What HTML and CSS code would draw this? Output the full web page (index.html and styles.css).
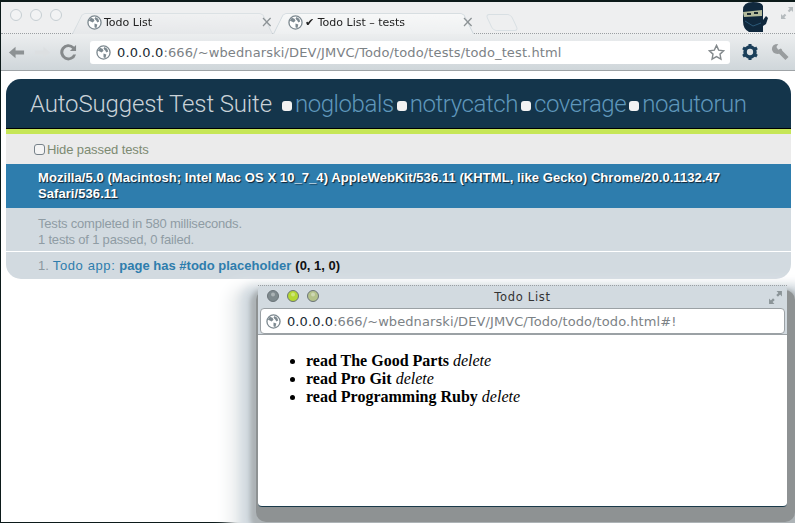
FILE: index.html
```html
<!DOCTYPE html>
<html lang="en">
<head>
  <meta charset="UTF-8">
  <meta name="viewport" content="width=device-width, initial-scale=1.0">
  <title>AutoSuggest Test Suite</title>
  <link rel="stylesheet" href="styles.css">
</head>
<body>
  <svg class="defs" width="0" height="0">
    <symbol id="globe" viewBox="0 0 16 16">
      <circle cx="8" cy="8" r="7" fill="#fff" stroke="#7d8990" stroke-width="1.4"/>
      <path d="M4 3l3 1 1 2-2 2-2-1-2-1zM9 2l3 2 1 3-2 1-1-2-2-2zM8 9l3 1-1 4-2-1z" fill="#7d8990"/>
    </symbol>
    <symbol id="dot" viewBox="0 0 12 12">
      <circle cx="6" cy="6" r="5.5" fill="currentColor" stroke="#6b7479"/>
      <circle cx="6" cy="4.5" r="2" fill="#fff" opacity=".35"/>
    </symbol>
    <symbol id="expand" viewBox="0 0 14 14">
      <path d="M8 1h5v5l-1.700-1.700-2 2-1.600-1.600 2-2zM6 13H1V8l1.700 1.700 2-2 1.600 1.600-2 2z" fill="currentColor"/>
    </symbol>
  </svg>

  <div class="browser">
    <div class="tabstrip">
      <div class="lights">
        <span class="light"></span>
        <span class="light"></span>
        <span class="light"></span>
      </div>
      <div class="tab">
        <svg class="favicon"><use href="#globe"/></svg>
        <span class="tab-title">Todo List</span>
        <span class="tab-close">×</span>
      </div>
      <div class="tab tab-active">
        <svg class="favicon"><use href="#globe"/></svg>
        <span class="tab-title">✔ Todo List – tests</span>
        <span class="tab-close">×</span>
      </div>
      <div class="new-tab"></div>
      <svg class="ninja" viewBox="0 0 30 32">
        <path d="M3 9Q3 1 13 1q9 0 10 4v14l3-4 2 2-2 6-3 2v6H9Q3 28 3 20z" fill="#10283d"/>
        <path d="M3 11l19-2v6L4 16z" fill="#b4bb9c"/>
        <path d="M7 12h4v2H7zM14 11h4v2h-4z" fill="#1b2a30"/>
        <path d="M5 20l8 5 8-3" fill="none" stroke="#2b5878"/>
      </svg>
      <svg class="fullscreen"><use href="#expand"/></svg>
    </div>

    <div class="toolbar">
      <svg class="nav-icon" viewBox="0 0 18 18"><path d="M1 9l7-6v4h9v4H8v4z" fill="#8d9294"/></svg>
      <svg class="nav-icon" viewBox="0 0 18 18"><path d="M17 9l-7-6v4H1v4h9v4z" fill="#dcdfe1"/></svg>
      <svg class="nav-icon" viewBox="0 0 18 18"><path d="M14 11a5.500 5.500 0 1 1-1-6l-2.500 2.500H17V1l-2 2A8.500 8.500 0 1 0 17 11z" fill="#85898b"/></svg>
      <div class="omnibox">
        <svg class="favicon"><use href="#globe"/></svg>
        <span class="url"><span class="host">0.0.0.0</span>:666/~wbednarski/DEV/JMVC/Todo/todo/tests/todo_test.html</span>
        <svg class="star" viewBox="0 0 18 18"><path d="M9 1.500l2.300 5 5.300.6-3.900 3.600 1 5.300L9 13.400 4.300 16l1-5.300L1.400 7.100l5.300-.6z" fill="#fff" stroke="#83898c" stroke-width="1.500"/></svg>
      </div>
      <svg class="tool-icon" viewBox="0 0 20 20">
        <circle cx="10" cy="10" r="5.500" fill="none" stroke="#1b3f5a" stroke-width="4"/>
        <path d="M10 10L10 1M10 10L10 19M10 10L2.200 5.500M10 10L17.800 14.500M10 10L2.200 14.500M10 10L17.800 5.500" stroke="#1b3f5a" stroke-width="3.400" stroke-dasharray="0 6 4"/>
      </svg>
      <svg class="tool-icon" viewBox="0 0 20 20"><path d="M1 7Q1 1 8 1L6 4.500l2 3 3-1.500q1.500 1 1.500 2.500l7 7-3.500 3.500-7-7Q2 13 1 7z" fill="#999d9f"/></svg>
    </div>

    <div class="page">
      <div class="suite">
        <h1 class="suite-header">
          <span class="suite-name">AutoSuggest Test Suite</span>
          <span class="option"><i class="box"></i>noglobals</span>
          <span class="option"><i class="box"></i>notrycatch</span>
          <span class="option"><i class="box"></i>coverage</span>
          <span class="option"><i class="box"></i>noautorun</span>
        </h1>
        <div class="suite-filter"><i class="checkbox"></i>Hide passed tests</div>
        <div class="suite-agent">Mozilla/5.0 (Macintosh; Intel Mac OS X 10_7_4) AppleWebKit/536.11 (KHTML, like Gecko) Chrome/20.0.1132.47 Safari/536.11</div>
        <div class="suite-result">Tests completed in 580 milliseconds.<br>1 tests of 1 passed, 0 failed.</div>
        <div class="suite-test">
          <span class="test-num">1.</span>
          <span class="test-module">Todo app:</span>
          <b class="test-name">page has #todo placeholder</b>
          <b class="test-count">(0, 1, 0)</b>
        </div>
      </div>
    </div>
  </div>

  <div class="popup">
    <div class="popup-title">
      <div class="popup-lights">
        <svg class="popup-light light-grey"><use href="#dot"/></svg>
        <svg class="popup-light light-green"><use href="#dot"/></svg>
        <svg class="popup-light light-pale"><use href="#dot"/></svg>
      </div>
      <span>Todo List</span>
      <svg class="popup-expand"><use href="#expand"/></svg>
    </div>
    <div class="popup-url">
      <svg class="favicon"><use href="#globe"/></svg>
      <span class="url"><span class="host">0.0.0.0</span>:666/~wbednarski/DEV/JMVC/Todo/todo/todo.html#!</span>
    </div>
    <div class="popup-body">
      <ul class="todos">
        <li><b>read The Good Parts</b> <i>delete</i></li>
        <li><b>read Pro Git</b> <i>delete</i></li>
        <li><b>read Programming Ruby</b> <i>delete</i></li>
      </ul>
    </div>
  </div>
</body>
</html>
```

FILE: styles.css
```css
html, body {
  margin: 0;
  height: 100%;
  overflow: hidden;
  background: #fff;
}

.defs {
  position: absolute;
}

.browser {
  height: 523px;
  box-sizing: border-box;
  border-top: 2px solid #0c1a1a;
  border-left: 1px solid #0c1a1a;
  border-bottom: 1px solid #0c1a1a;
  display: flex;
  flex-direction: column;
  font-family: "DejaVu Sans", sans-serif;
}

/* tabs */
.tabstrip {
  height: 32px;
  flex: none;
  display: flex;
  align-items: flex-end;
  background: #eeeff0;
  border-bottom: 1px dotted #9a9fa2;
  box-sizing: border-box;
}

.lights {
  display: flex;
  gap: 8px;
  margin: 0 0 12px 9px;
  width: 62px;
  flex: none;
}

.light {
  width: 12px;
  height: 12px;
  box-sizing: border-box;
  border: 1px solid #c6ced3;
  border-radius: 50%;
  background: #f2f3f4;
}

.tab {
  position: relative;
  width: 201px;
  height: 24px;
  margin-bottom: -1px;
  flex: none;
  display: flex;
  align-items: center;
  gap: 2px;
  padding: 0 0 0 15px;
  box-sizing: border-box;
  font-size: 11px;
  color: #222;
}

.tab::before {
  content: "";
  position: absolute;
  inset: 0;
  z-index: 0;
  background: linear-gradient(#f0f1f2, #e6e8ea);
  border: 1px solid #d5dce0;
  border-bottom: 0;
  border-radius: 4px 4px 0 0;
  transform: perspective(50px) rotateX(14deg);
  transform-origin: bottom;
}

.tab > * {
  position: relative;
}

.tab-active::before {
  background: linear-gradient(#f7f8f8, #eef0f1);
  border-color: #cfd8dd;
}

.tab-title {
  flex: 1;
  white-space: nowrap;
}

.tab-close {
  font-size: 15px;
  line-height: 1;
  color: #8d9396;
}

.favicon {
  width: 15px;
  height: 15px;
  flex: none;
}

.new-tab {
  width: 24px;
  height: 15px;
  margin: 0 0 2px 15px;
  border: 1px solid #d8dfe3;
  border-radius: 4px;
  transform: skewX(25deg);
  flex: none;
}

.ninja {
  width: 30px;
  height: 32px;
  margin-left: auto;
  margin-right: 10px;
  flex: none;
}

.fullscreen {
  width: 14px;
  height: 14px;
  color: #b5bbbe;
  margin: 0 1px 13px 0;
  flex: none;
}

/* toolbar */
.toolbar {
  height: 37px;
  flex: none;
  display: flex;
  align-items: center;
  padding: 0 0 0 7px;
  gap: 6px;
  box-sizing: border-box;
  background: linear-gradient(#eceeef, #cfd6da);
  border-bottom: 1px solid #9ea3a6;
}

.nav-icon {
  width: 17px;
  height: 17px;
  margin-right: 3px;
  flex: none;
}

.omnibox {
  flex: 1;
  height: 23px;
  display: flex;
  align-items: center;
  gap: 6px;
  padding: 0 5px 0 6px;
  margin-left: 4px;
  margin-right: 5px;
  background: #fff;
  border-radius: 3px;
}

.url {
  font-size: 13px;
  letter-spacing: .13px;
  color: #7c8286;
  white-space: nowrap;
  flex: 1;
}

.host {
  color: #1a2a33;
}

.star {
  width: 17px;
  height: 17px;
  flex: none;
}

.tool-icon {
  width: 18px;
  height: 18px;
  flex: none;
  margin-right: 6px;
}

/* test suite */
.page {
  flex: 1;
  padding: 8px 4px 0 5px;
  background: #fff;
}

.suite {
  border-radius: 15px;
  overflow: hidden;
  background: #d2dae0;
  font-family: "Liberation Sans", sans-serif;
  font-size: 13px;
}

.suite-header {
  margin: 0;
  height: 50px;
  padding-left: 24px;
  box-sizing: border-box;
  display: flex;
  align-items: center;
  gap: 3px;
  background: #14354b;
  border-bottom: 1px solid #000;
  font-family: Roboto, sans-serif;
  font-weight: 300;
  font-size: 24px;
  white-space: nowrap;
}

.suite-name {
  color: #c9d2d8;
  margin-right: 7px;
  letter-spacing: -.14px;
}

.option {
  display: flex;
  align-items: center;
  color: #5f97bb;
  gap: 3px;
  letter-spacing: -.42px;
}

.box {
  width: 10px;
  height: 10px;
  margin-top: 4px;
  border-radius: 3px;
  background: #f2f2f2;
}

.suite-filter {
  height: 35px;
  box-sizing: border-box;
  display: flex;
  align-items: center;
  padding-left: 28px;
  background: #ebebeb;
  border-top: 5px solid #c6e657;
  color: #7d8a72;
  letter-spacing: -.1px;
}

.checkbox {
  width: 9px;
  height: 9px;
  margin-right: 2px;
  border: 1px solid #77828a;
  border-radius: 3px;
  background: #f4f4f4;
}

.suite-agent {
  height: 44px;
  box-sizing: border-box;
  padding: 6px 32px 0;
  line-height: 16px;
  background: #2e7dad;
  color: #fff;
  font-weight: bold;
  letter-spacing: .07px;
  text-shadow: 1px 1px 1px #123;
}

.suite-result {
  height: 44px;
  box-sizing: border-box;
  padding: 8px 32px 0;
  line-height: 16px;
  letter-spacing: -.2px;
  color: #8f9ca4;
  border-bottom: 1px solid #fff;
}

.suite-test {
  height: 27px;
  display: flex;
  align-items: center;
  padding-left: 32px;
  gap: 4px;
}

.test-num {
  color: #8b989f;
}

.test-module {
  color: #2e7dad;
  letter-spacing: .6px;
}

.test-name {
  color: #2e7dad;
}

.test-count {
  color: #111;
}

/* popup window */
.popup {
  position: absolute;
  left: 258px;
  top: 285px;
  width: 529px;
  height: 222px;
  display: flex;
  flex-direction: column;
  background: #d2dae0;
  border-radius: 5px;
  box-shadow: 3px 10px 0 5px #8e9293, 2px 14px 4px 10px #adb3b6, 2px 20px 8px 20px #d2dae0, 2px 32px 14px 32px #eef0f1;
  font-family: "DejaVu Sans", sans-serif;
}

.popup-title {
  height: 23px;
  flex: none;
  position: relative;
  display: flex;
  align-items: center;
  justify-content: center;
  font-size: 11.500px;
  letter-spacing: .7px;
  color: #333;
  border-top: 1px dotted #9a9fa2;
  box-sizing: border-box;
}

.popup-lights {
  position: absolute;
  left: 9px;
  top: 4px;
  display: flex;
  gap: 8px;
}

.popup-light {
  width: 12px;
  height: 12px;
}

.light-grey {
  color: #7f8a8e;
}

.light-green {
  color: #b5d832;
}

.light-pale {
  color: #b4c28a;
}

.popup-expand {
  position: absolute;
  right: 4px;
  top: 4px;
  width: 15px;
  height: 15px;
  color: #8b9498;
}

.popup-url {
  height: 26px;
  flex: none;
  display: flex;
  align-items: center;
  gap: 6px;
  margin: 0 2px;
  padding-left: 5px;
  box-sizing: border-box;
  background: #fff;
  border: 1px solid #9ba1a5;
  border-radius: 4px;
}

.popup-url .url {
  letter-spacing: .09px;
}

.popup-body {
  flex: 1;
  background: #fff;
  border-top: 1px solid #9ba1a5;
  border-bottom: 1px solid #1a3a4a;
  border-radius: 0 0 4px 4px;
}

.todos {
  margin: 17px 0 0;
  padding-left: 48px;
  font-family: "Liberation Serif", serif;
  font-size: 16px;
  line-height: 18px;
  color: #000;
}
```
